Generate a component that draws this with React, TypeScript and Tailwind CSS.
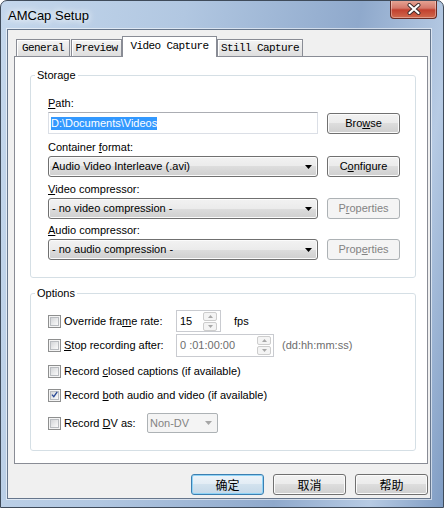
import type { ReactNode } from 'react';

// mnemonic underline
const U = ({ children }: { children: ReactNode }) => (
  <span className="underline underline-offset-1">{children}</span>
);

const DownArrow = ({ color = '#000' }: { color?: string }) => (
  <svg width="7" height="4" viewBox="0 0 7 4">
    <path d="M0 0H7L3.5 4Z" fill={color} />
  </svg>
);

function Btn({
  children,
  disabled,
  isDefault,
  className = '',
}: {
  children: ReactNode;
  disabled?: boolean;
  isDefault?: boolean;
  className?: string;
}) {
  let look =
    'border-[#707070] text-black bg-[linear-gradient(to_bottom,#f2f2f2,#ebebeb_50%,#dddddd_50%,#cfcfcf)] shadow-[inset_0_0_0_1px_#fbfbfb]';
  if (disabled) look = 'border-[#adb2b5] text-[#838383] bg-[#f4f4f4]';
  if (isDefault)
    look =
      'border-[#3c7fb1] text-black bg-[linear-gradient(to_bottom,#edf4fa,#e2ecf4_50%,#d2e2ee_50%,#c4d8e8)] shadow-[inset_0_0_0_1px_#8fd3f6]';
  return (
    <div
      className={`flex h-[21px] w-[73px] shrink-0 items-center justify-center rounded-[3px] border ${look} ${className}`}
    >
      {children}
    </div>
  );
}

function Combo({ text, width }: { text: string; width: string }) {
  return (
    <div
      className={`flex h-[21px] ${width} items-center justify-between rounded-[3px] border border-[#707070] bg-[linear-gradient(to_bottom,#f2f2f2,#ebebeb_50%,#dddddd_50%,#cfcfcf)] pl-[3px] pr-[5px] shadow-[inset_0_0_0_1px_#fbfbfb]`}
    >
      <span>{text}</span>
      <DownArrow />
    </div>
  );
}

function Check({ checked }: { checked?: boolean }) {
  return (
    <span className="flex h-[13px] w-[13px] shrink-0 border border-[#8e8f8f] bg-[#f4f4f4] p-px">
      <span className="flex h-full w-full items-center justify-center border border-[#b9bcc0] bg-linear-to-br from-[#d4d6d9] to-[#fbfbfb]">
        {checked && (
          <svg width="9" height="9" viewBox="0 0 9 9" className="-mt-px">
            <path d="M1.2 4.6 3.6 7.2 8 1.2" fill="none" stroke="#2a4a96" strokeWidth="1.7" />
          </svg>
        )}
      </span>
    </span>
  );
}

function SpinBtns() {
  const tri = (up: boolean) => (
    <svg width="5" height="3" viewBox="0 0 5 3">
      <path d={up ? 'M0 3H5L2.5 0Z' : 'M0 0H5L2.5 3Z'} fill="#a8a8a8" />
    </svg>
  );
  return (
    <div className="flex flex-col gap-px">
      <div className="flex h-[9px] w-[14px] items-center justify-center rounded-[2px] border border-[#cdcdcd] bg-[#f4f4f4]">
        {tri(true)}
      </div>
      <div className="flex h-[9px] w-[14px] items-center justify-center rounded-[2px] border border-[#cdcdcd] bg-[#f4f4f4]">
        {tri(false)}
      </div>
    </div>
  );
}

function Tab({ label, width, active, className = '' }: { label: string; width: string; active?: boolean; className?: string }) {
  if (active)
    return (
      <div
        className={`relative z-10 -mb-px flex h-[21px] ${width} items-center justify-center border border-b-0 border-[#898c95] bg-white pb-[2px] ${className}`}
      >
        {label}
      </div>
    );
  return (
    <div
      className={`flex h-[17px] ${width} items-center justify-center border border-b-0 border-[#898c95] bg-linear-to-b from-[#f4f4f4] to-[#dedede] shadow-[inset_1px_1px_0_#ffffff] ${className}`}
    >
      {label}
    </div>
  );
}

export default function App() {
  return (
    <div className="flex h-[508px] w-[444px] flex-col overflow-hidden rounded-t-[7px] border border-[#3f4b5a] bg-[linear-gradient(100deg,#c4d7ec_0%,#b1c7e1_35%,#8fa9cc_68%,#b7cbe4_86%,#7f9cc3_100%)] font-['Liberation_Sans',Arial,sans-serif] text-[11px] leading-[13px] text-black">
      {/* title bar */}
      <div className="flex h-[28px] shrink-0 items-start justify-between pl-[7px] pr-[6px]">
        <span className="mt-[7px] text-[13px] leading-[16px] [text-shadow:0_0_6px_#ffffff,0_0_10px_#ffffff]">
          AMCap Setup
        </span>
        <div className="-mt-px flex h-[19px] w-[47px] items-center justify-center rounded-b-[4px] border border-t-0 border-[#6b2b23] bg-[linear-gradient(to_bottom,#e8a898,#d4786a_45%,#c2412f_55%,#d06a4e)] shadow-[inset_0_0_0_1px_rgba(255,255,255,0.35)]">
          <svg width="14" height="12" viewBox="0 0 14 12">
            <path d="M2.5 2 11.5 10M11.5 2 2.5 10" stroke="#3b2a2a" strokeWidth="4" strokeLinecap="round" />
            <path d="M2.5 2 11.5 10M11.5 2 2.5 10" stroke="#ffffff" strokeWidth="2.2" strokeLinecap="round" />
          </svg>
        </div>
      </div>

      {/* client area */}
      <div className="ml-[6px] flex h-[470px] w-[424px] flex-col border border-[#66768c] bg-[#f0f0f0] pt-[6px] shadow-[0_0_0_1px_rgba(255,255,255,0.55)]">
        {/* tabs */}
        <div className="flex h-[20px] items-end pl-[8px] font-['Liberation_Mono','Courier_New',monospace] text-[11px] tracking-[-0.6px]">
          <Tab label="General" width="w-[54px]" />
          <Tab label="Preview" width="w-[51px]" className="ml-px" />
          <Tab label="Video Capture" width="w-[95px]" active />
          <Tab label="Still Capture" width="w-[86px]" />
        </div>

        {/* tab page */}
        <div className="ml-[6px] flex h-[408px] w-[414px] flex-col border border-[#898c95] bg-white pl-[15px] pt-[12px]">
          <fieldset className="w-[386px] rounded-[3px] border border-[#d5dfe5] p-0">
            <legend className="ml-[4px] px-[2px]">Storage</legend>
            <div className="pb-[17px] pl-[17px]">
              <div className="mt-[15px]">
                <U>P</U>ath:
              </div>
              <div className="mt-[2px] flex items-start gap-[9px]">
                <div className="flex h-[22px] w-[270px] items-center border border-[#dbdfe6] border-t-[#abadb3] bg-white pl-[2px]">
                  <span className="bg-[#3399ff] text-white">D:\Documents\Videos</span>
                </div>
                <Btn className="mt-px">
                  Bro<U>w</U>se
                </Btn>
              </div>

              <div className="mt-[7px]">
                Container <U>f</U>ormat:
              </div>
              <div className="mt-[2px] flex gap-[9px]">
                <Combo text="Audio Video Interleave (.avi)" width="w-[270px]" />
                <Btn>
                  C<U>o</U>nfigure
                </Btn>
              </div>

              <div className="mt-[6px]">
                <U>V</U>ideo compressor:
              </div>
              <div className="mt-[2px] flex gap-[9px]">
                <Combo text="- no video compression -" width="w-[270px]" />
                <Btn disabled>
                  P<U>r</U>operties
                </Btn>
              </div>

              <div className="mt-[5px]">
                <U>A</U>udio compressor:
              </div>
              <div className="mt-[2px] flex gap-[9px]">
                <Combo text="- no audio compression -" width="w-[270px]" />
                <Btn disabled>
                  Prop<U>e</U>rties
                </Btn>
              </div>
            </div>
          </fieldset>

          <fieldset className="mt-[9px] w-[386px] rounded-[3px] border border-[#d5dfe5] p-0">
            <legend className="ml-[4px] px-[2px]">Options</legend>
            <div className="pb-[17px] pl-[17px]">
              <div className="mt-[10px] flex h-[22px] items-center">
                <div className="flex w-[128px] items-center gap-[3px]">
                  <Check />
                  <span>
                    Override fra<U>m</U>e rate:
                  </span>
                </div>
                <div className="flex h-[22px] w-[45px] items-center justify-between border border-[#c9cbd0] bg-white pl-[3px] pr-[3px]">
                  <span>15</span>
                  <SpinBtns />
                </div>
                <span className="ml-[13px]">fps</span>
              </div>

              <div className="mt-[2px] flex h-[23px] items-center">
                <div className="flex w-[128px] items-center gap-[3px]">
                  <Check />
                  <span>
                    <U>S</U>top recording after:
                  </span>
                </div>
                <div className="flex h-[23px] w-[98px] items-center justify-between border border-[#c9cbd0] bg-white pl-[3px] pr-[2px] text-[#6d6d6d]">
                  <span>0 :01:00:00</span>
                  <SpinBtns />
                </div>
                <span className="ml-[8px] text-[#6d6d6d]">(dd:hh:mm:ss)</span>
              </div>

              <div className="mt-[5px] flex h-[18px] items-center gap-[3px]">
                <Check />
                <span>
                  Record <U>c</U>losed captions (if available)
                </span>
              </div>

              <div className="mt-[6px] flex h-[18px] items-center gap-[3px]">
                <Check checked />
                <span>
                  Record <U>b</U>oth audio and video (if available)
                </span>
              </div>

              <div className="mt-[9px] flex h-[20px] items-center">
                <div className="flex w-[99px] items-center gap-[3px]">
                  <Check />
                  <span>
                    Record <U>D</U>V as:
                  </span>
                </div>
                <div className="flex h-[20px] w-[71px] items-center justify-between rounded-[2px] border border-[#adb2b5] bg-[#f4f4f4] pl-[2px] pr-[5px] text-[#838383]">
                  <span>Non-DV</span>
                  <DownArrow color="#a6a6a6" />
                </div>
              </div>
            </div>
          </fieldset>
        </div>

        {/* dialog buttons */}
        <div className="mt-[10px] flex w-[420px] justify-end gap-[9px] font-['Noto_Sans_CJK_SC',sans-serif] text-[12px]">
          <Btn isDefault className="w-[72px]">确定</Btn>
          <Btn className="w-[72px]">取消</Btn>
          <Btn className="w-[72px]">帮助</Btn>
        </div>
      </div>
    </div>
  );
}
